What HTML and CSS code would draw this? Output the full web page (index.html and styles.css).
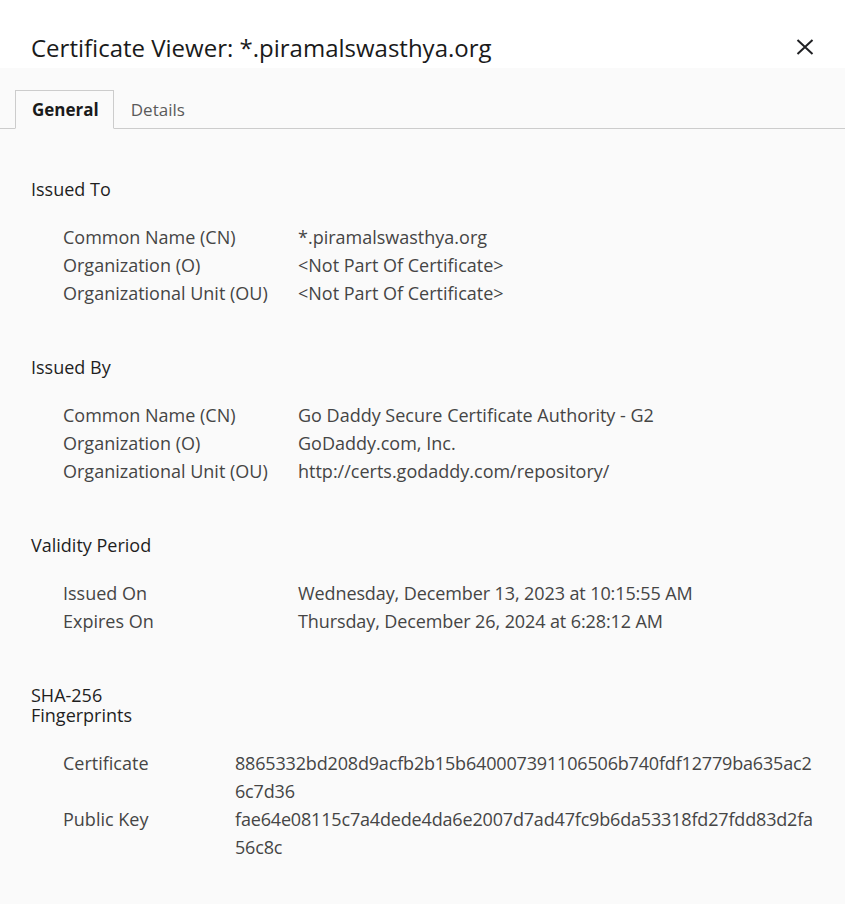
FILE: index.html
```html
<!DOCTYPE html>
<html lang="en">
<head>
<meta charset="utf-8">
<title>Certificate Viewer</title>
<link rel="stylesheet" href="styles.css">
</head>
<body>
<div class="dialog">
  <header class="header">
    <h1 class="title">Certificate Viewer: *.piramalswasthya.org</h1>
    <button class="close" aria-label="Close">
      <svg viewBox="0 0 18 16" width="18" height="16"><path d="M1.5 1 L16.5 15 M16.5 1 L1.5 15" stroke="#202124" stroke-width="2" fill="none"/></svg>
    </button>
  </header>
  <nav class="tabs">
    <div class="tab active">General</div>
    <div class="tab">Details</div>
  </nav>
  <main class="content">
    <section class="section">
      <h2 class="heading">Issued To</h2>
      <div class="rows">
        <div class="label">Common Name (CN)</div><div class="value">*.piramalswasthya.org</div>
        <div class="label">Organization (O)</div><div class="value">&lt;Not Part Of Certificate&gt;</div>
        <div class="label">Organizational Unit (OU)</div><div class="value">&lt;Not Part Of Certificate&gt;</div>
      </div>
    </section>
    <section class="section">
      <h2 class="heading">Issued By</h2>
      <div class="rows">
        <div class="label">Common Name (CN)</div><div class="value">Go Daddy Secure Certificate Authority - G2</div>
        <div class="label">Organization (O)</div><div class="value">GoDaddy.com, Inc.</div>
        <div class="label">Organizational Unit (OU)</div><div class="value">http://certs.godaddy.com/repository/</div>
      </div>
    </section>
    <section class="section">
      <h2 class="heading">Validity Period</h2>
      <div class="rows">
        <div class="label">Issued On</div><div class="value date">Wednesday, December 13, 2023 at 10:15:55 AM</div>
        <div class="label">Expires On</div><div class="value date">Thursday, December 26, 2024 at 6:28:12 AM</div>
      </div>
    </section>
    <section class="section">
      <h2 class="heading">SHA-256 Fingerprints</h2>
      <div class="rows rows-hash">
        <div class="label">Certificate</div>
        <div class="value hash"><span class="hash-line">8865332bd208d9acfb2b15b640007391106506b740fdf12779ba635ac2</span><span class="hash-line">6c7d36</span></div>
        <div class="label">Public Key</div>
        <div class="value hash"><span class="hash-line">fae64e08115c7a4dede4da6e2007d7ad47fc9b6da53318fd27fdd83d2fa</span><span class="hash-line">56c8c</span></div>
      </div>
    </section>
  </main>
</div>
</body>
</html>
```
FILE: styles.css
```css
* { box-sizing: border-box; }
html, body {
  margin: 0;
  padding: 0;
  height: 100%;
}
body {
  font-family: "Open Sans", "Noto Sans", sans-serif;
  background: #fafafa;
  color: #454545;
}
.dialog {
  min-height: 100%;
  display: flex;
  flex-direction: column;
}
.header {
  height: 68px;
  background: #ffffff;
  display: flex;
  align-items: flex-start;
  justify-content: space-between;
  padding: 0 31px 0 31px;
}
.title {
  margin: 0;
  margin-top: 32px;
  font-size: 24px;
  line-height: 32px;
  font-weight: 400;
  color: #1a1a1a;
}
.close {
  margin-top: 39px;
  width: 18px;
  height: 16px;
  padding: 0;
  border: 0;
  background: transparent;
  display: flex;
}
.tabs {
  height: 61px;
  display: flex;
  align-items: flex-end;
  padding-left: 15px;
  border-bottom: 1px solid #cccccc;
}
.tab {
  height: 39px;
  margin-bottom: -1px;
  padding: 0 14px 0 16px;
  font-size: 17px;
  line-height: 38px;
  color: #5a5a5a;
  border: 1px solid transparent;
  border-bottom: 0;
}
.tab.active {
  font-weight: 700;
  color: #1a1a1a;
  background: #fafafa;
  border-color: #cccccc;
  border-bottom: 1px solid #fafafa;
}
.content {
  flex: 1;
  padding: 50px 33px 40px 31px;
  display: flex;
  flex-direction: column;
  gap: 50px;
}
.heading {
  margin: 0;
  width: 150px;
  font-size: 18px;
  line-height: 20px;
  font-weight: 400;
  color: #1f1f1f;
}
.rows {
  margin-top: 24px;
  padding-left: 32px;
  display: grid;
  grid-template-columns: 235px 1fr;
  font-size: 18px;
  line-height: 28px;
}
.rows-hash {
  grid-template-columns: 172px 1fr;
}
.date {
  letter-spacing: -0.1px;
}
.hash {
  letter-spacing: -0.17px;
}
.hash-line {
  display: block;
  white-space: nowrap;
}
```
